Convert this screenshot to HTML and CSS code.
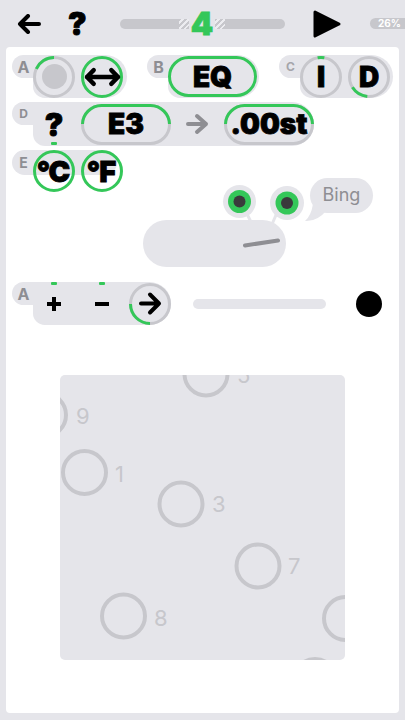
FILE: index.html
```html
<!DOCTYPE html>
<html>
<head>
<meta charset="utf-8">
<link rel="stylesheet" href="styles.css">
</head>
<body>
<header class="topbar">
  <svg class="back" viewBox="0 0 24 20"><path d="M22 10H3M11 2L3 10L11 18"/></svg>
  <span class="help">?</span>
  <div class="progress">
    <span class="seg seg-l"></span><span class="hatch"></span><span class="level">4</span><span class="hatch"></span><span class="seg seg-r"></span>
  </div>
  <svg class="play" viewBox="0 0 30 30"><polygon points="3,3 27,15 3,27"/></svg>
  <span class="battery">26%</span>
</header>

<main class="panel">
  <div class="row row-top">
    <div class="group">
      <span class="tag">A</span>
      <div class="ctrl ctrl-a">
        <div class="cbtn">
          <svg class="ring" viewBox="0 0 42 42"><circle class="track" cx="21" cy="21" r="19.5"/><circle class="arc" cx="21" cy="21" r="19.5" pathLength="360" stroke-dasharray="65 360" transform="rotate(205 21 21)"/></svg>
          <span class="knob"></span>
        </div>
        <div class="cbtn">
          <svg class="ring" viewBox="0 0 42 42"><circle class="track on" cx="21" cy="21" r="19.5"/></svg>
          <svg class="icon swap" viewBox="0 0 40 20"><path d="M4 10H36M11 3L4 10L11 17M29 3L36 10L29 17"/></svg>
        </div>
      </div>
    </div>
    <div class="group">
      <span class="tag">B</span>
      <div class="ctrl ctrl-b">
        <div class="pill pill-on">EQ</div>
      </div>
    </div>
    <div class="group">
      <span class="tag tag-small tag-light">C</span>
      <div class="ctrl ctrl-c">
        <div class="cbtn">
          <svg class="ring" viewBox="0 0 42 42"><circle class="track" cx="21" cy="21" r="19.5"/><circle class="arc" cx="21" cy="21" r="19.5" pathLength="360" stroke-dasharray="20 360" transform="rotate(260 21 21)"/></svg>
          <span class="glyph">I</span>
        </div>
        <div class="cbtn">
          <svg class="ring" viewBox="0 0 42 42"><circle class="track" cx="21" cy="21" r="19.5"/><circle class="arc" cx="21" cy="21" r="19.5" pathLength="360" stroke-dasharray="53 360" transform="rotate(95 21 21)"/></svg>
          <span class="glyph">D</span>
        </div>
      </div>
    </div>
  </div>

  <div class="row row-d">
    <div class="group">
      <span class="tag tag-small">D</span>
      <div class="ctrl ctrl-d">
        <div class="qbtn dash-bottom"><span class="glyph q">?</span></div>
        <div class="pill pill-half">E3</div>
        <div class="mid-arrow">
          <svg viewBox="0 0 25 22"><path d="M3 11H21M12 3L21 11L12 19"/></svg>
        </div>
        <div class="pill pill-half">.00st</div>
      </div>
    </div>
  </div>

  <div class="scene">
    <div class="row row-e">
      <div class="group">
        <span class="tag tag-mid">E</span>
        <div class="ctrl ctrl-e">
          <div class="cbtn">
            <svg class="ring" viewBox="0 0 42 42"><circle class="track on" cx="21" cy="21" r="19.5"/></svg>
            <span class="glyph deg">°C</span>
          </div>
          <div class="cbtn">
            <svg class="ring" viewBox="0 0 42 42"><circle class="track on" cx="21" cy="21" r="19.5"/></svg>
            <span class="glyph deg">°F</span>
          </div>
        </div>
      </div>
    </div>
    <svg class="creature" viewBox="143 178 245 92">
      <rect class="body" x="143" y="220" width="143" height="47" rx="23.5"/>
      <line class="mouth" x1="245" y1="245.5" x2="278" y2="240.5"/>
      <line class="stalk" x1="247" y1="214" x2="251" y2="222"/>
      <line class="stalk" x1="276" y1="215" x2="273" y2="222"/>
      <circle class="eye-out" cx="239.5" cy="201.5" r="16.5"/>
      <circle class="eye-iris" cx="239.5" cy="201.5" r="11.5"/>
      <circle class="eye-pupil" cx="239.5" cy="201.5" r="6"/>
      <circle class="eye-out" cx="287" cy="203" r="17"/>
      <circle class="eye-iris" cx="287" cy="203" r="11.5"/>
      <circle class="eye-pupil" cx="287" cy="203" r="6"/>
      <path class="bubble" d="M313 204 Q311 216 305 221 Q317 222 327 210 Z"/>
      <rect class="bubble" x="310" y="178" width="63" height="35" rx="17.5"/>
      <text class="bing" x="341.5" y="201">Bing</text>
    </svg>
  </div>

  <div class="row row-4">
    <div class="group">
      <span class="tag">A</span>
      <div class="ctrl ctrl-4">
        <div class="qbtn dash-top">
          <svg class="icon pm" viewBox="0 0 18 18"><path d="M9 2V16M2 9H16"/></svg>
        </div>
        <div class="qbtn dash-top">
          <svg class="icon pm" viewBox="0 0 18 18"><path d="M2 9H16"/></svg>
        </div>
        <div class="cbtn">
          <svg class="ring" viewBox="0 0 42 42"><circle class="track" cx="21" cy="21" r="19.5"/><circle class="arc" cx="21" cy="21" r="19.5" pathLength="360" stroke-dasharray="90 360" transform="rotate(90 21 21)"/></svg>
          <svg class="icon go" viewBox="0 0 25 25"><path d="M3 12.5H21M12 3.5L21 12.5L12 21.5"/></svg>
        </div>
      </div>
    </div>
    <div class="track-bar"></div>
    <div class="dot"></div>
  </div>

  <div class="field">
    <svg viewBox="0 0 285 285">
      <g class="rings">
        <circle cx="146" cy="-1" r="21.5"/>
        <circle cx="-15.5" cy="40" r="21.5"/>
        <circle cx="24.5" cy="97.5" r="21.5"/>
        <circle cx="121" cy="129" r="21.5"/>
        <circle cx="198" cy="191" r="21.5"/>
        <circle cx="63.5" cy="241" r="21.5"/>
        <circle cx="285.5" cy="243.5" r="21.5"/>
        <circle cx="255" cy="305.5" r="21.5"/>
      </g>
      <g class="labels">
        <text x="177" y="8">5</text>
        <text x="16" y="49">9</text>
        <text x="55" y="107">1</text>
        <text x="152" y="137">3</text>
        <text x="228" y="199">7</text>
        <text x="94" y="251">8</text>
      </g>
    </svg>
  </div>
</main>
</body>
</html>
```

FILE: styles.css
```css
* { box-sizing: border-box; margin: 0; padding: 0; }
html, body { width: 405px; height: 720px; overflow: hidden; }
body {
  background: #e5e5ea;
  font-family: Inter, "Noto Sans", sans-serif;
  color: #000;
}

/* top bar */
.topbar { height: 47px; display: flex; align-items: center; }
.back {
  margin-left: 17px; width: 24px; height: 20px; flex-shrink: 0;
  fill: none; stroke: #000; stroke-width: 4; stroke-linecap: round; stroke-linejoin: round;
}
.help {
  margin-left: 27px; width: 18px; flex-shrink: 0;
  font-size: 31px; font-weight: 900; line-height: 1; text-align: center;
  -webkit-text-stroke: 0.8px #000;
}
.progress { margin-left: 34px; width: 165px; height: 10px; display: flex; align-items: center; flex-shrink: 0; }
.seg { height: 10px; background: #c7c7cc; }
.seg-l { width: 59px; border-radius: 5px 0 0 5px; }
.seg-r { width: 60px; border-radius: 0 5px 5px 0; }
.hatch {
  width: 10px; height: 10px;
  background: repeating-linear-gradient(135deg, #c7c7cc 0 2px, #ececf0 2px 4px);
}
.level {
  width: 26px; height: 10px; display: flex; align-items: center; justify-content: center;
  font-size: 32px; font-weight: 900; color: #34c759; line-height: 1;
  -webkit-text-stroke: 0.8px #34c759;
}
.play { margin-left: 27px; width: 30px; height: 30px; flex-shrink: 0; fill: #000; stroke: #000; stroke-width: 3; stroke-linejoin: round; }
.battery {
  margin-left: 28px; width: 40px; height: 11px; flex-shrink: 0;
  background: #c7c7cc; border-radius: 6px;
  color: #fff; font-size: 10px; font-weight: 700; line-height: 11px; padding-left: 8px;
}

/* panel */
.panel {
  margin: 0 6px; height: 666px; background: #fff; border-radius: 4px;
  padding: 8px 6px 0;
}
.row { display: flex; align-items: flex-start; }
.row-top { height: 43px; justify-content: space-between; }
.row-d { height: 44px; margin-top: 4px; }
.group { display: flex; align-items: flex-start; }
.tag {
  width: 21px; height: 23px; background: #e5e5ea; border-radius: 12px 0 0 12px;
  display: flex; align-items: center; justify-content: center; padding-left: 2px;
  font-size: 16px; font-weight: 700; color: #8e8e93;
}
.tag-small { font-size: 12px; }
.tag-mid { font-size: 14px; }
.tag-light { color: #a5a5aa; }
.ctrl {
  display: flex; align-items: center; gap: 6px;
  background: #e5e5ea; border-radius: 0 22px 22px 12px;
}
.ctrl-a { height: 43px; padding-right: 4px; }
.ctrl-b { height: 43px; padding-right: 2px; }
.ctrl-c { height: 43px; padding-right: 3px; }
.ctrl-d { height: 44px; gap: 0; }
.ctrl-4 { height: 43px; }

.cbtn, .qbtn {
  width: 42px; height: 42px; flex-shrink: 0; position: relative;
  display: flex; align-items: center; justify-content: center;
}
.ring { position: absolute; inset: 0; width: 42px; height: 42px; }
.ring circle { fill: none; stroke-width: 3; }
.ring .track { stroke: #c7c7cc; }
.ring .track.on { stroke: #34c759; }
.ring .arc { stroke: #34c759; }
.knob { width: 25px; height: 25px; border-radius: 50%; background: #c7c7cc; }
.icon { fill: none; stroke: #000; stroke-linecap: round; stroke-linejoin: round; position: relative; }
.swap { width: 39px; height: 20px; stroke-width: 4.5; }
.pm { width: 18px; height: 18px; stroke-width: 4; stroke-linecap: butt; }
.go { width: 25px; height: 25px; stroke-width: 4; }
.glyph {
  position: relative; font-size: 28px; font-weight: 900; line-height: 1;
  -webkit-text-stroke: 0.8px #000;
}
.glyph.q { font-size: 31px; }
.glyph.deg { font-size: 29px; letter-spacing: -1px; margin-left: -2px; }

.qbtn { margin-right: 6px; }
.ctrl-4 .qbtn { margin-right: 0; }
.dash-top::before, .dash-bottom::after {
  content: ""; position: absolute; left: 18px; width: 6px; height: 3px;
  background: #34c759; border-radius: 1px;
}
.dash-top::before { top: -1px; }
.dash-bottom::after { bottom: 0; }

.pill {
  position: relative; width: 90px; height: 41px; flex-shrink: 0;
  border: 3px solid #c7c7cc; border-radius: 21px;
  display: flex; align-items: center; justify-content: center;
  font-size: 28px; font-weight: 900; line-height: 1;
  -webkit-text-stroke: 0.8px #000;
}
.pill-on { border-color: #34c759; width: 89px; }
.pill-half::before {
  content: ""; position: absolute; inset: -3px;
  border: 3px solid #34c759; border-radius: 21px;
  clip-path: inset(0 0 50% 0);
}
.mid-arrow { width: 53px; height: 22px; display: flex; justify-content: center; }
.mid-arrow svg {
  width: 25px; height: 22px; fill: none; stroke: #8e8e93; stroke-width: 4;
  stroke-linecap: round; stroke-linejoin: round;
}

/* scene with row E and creature */
.scene { position: relative; height: 128px; margin-top: 4px; }
.ctrl-e {
  height: 25px; align-items: flex-start; width: 84px; border-radius: 0 13px 13px 0;
}
.row-e .tag { height: 25px; border-radius: 13px 0 0 13px; }
.creature { position: absolute; left: 131px; top: 28px; width: 245px; height: 92px; }
.creature .body, .creature .bubble, .creature .eye-out { fill: #e5e5ea; }
.creature .mouth { stroke: #8e8e93; stroke-width: 4; stroke-linecap: round; }
.creature .stalk { stroke: #e5e5ea; stroke-width: 3; stroke-linecap: round; }
.creature .eye-iris { fill: #34c759; }
.creature .eye-pupil { fill: #3a3a3c; }
.creature .bing { font-family: Inter, sans-serif; font-size: 18px; fill: #8e8e93; text-anchor: middle; }

/* row 4 */
.row-4 { height: 43px; margin-top: 4px; align-items: center; }
.row-4 .group { align-self: flex-start; }
.track-bar { margin-left: 22px; width: 133px; height: 10px; border-radius: 5px; background: #e5e5ea; }
.dot { margin-left: 30px; width: 26px; height: 26px; border-radius: 50%; background: #000; }

/* playground */
.field {
  margin: 50px auto 0; width: 285px; height: 285px;
  background: #e5e5ea; border-radius: 5px; overflow: hidden;
}
.field svg { display: block; width: 285px; height: 285px; }
.rings circle { fill: none; stroke: #c7c7cc; stroke-width: 4; }
.labels text { font-family: Inter, sans-serif; font-size: 22px; fill: #c7c7cc; }
```
